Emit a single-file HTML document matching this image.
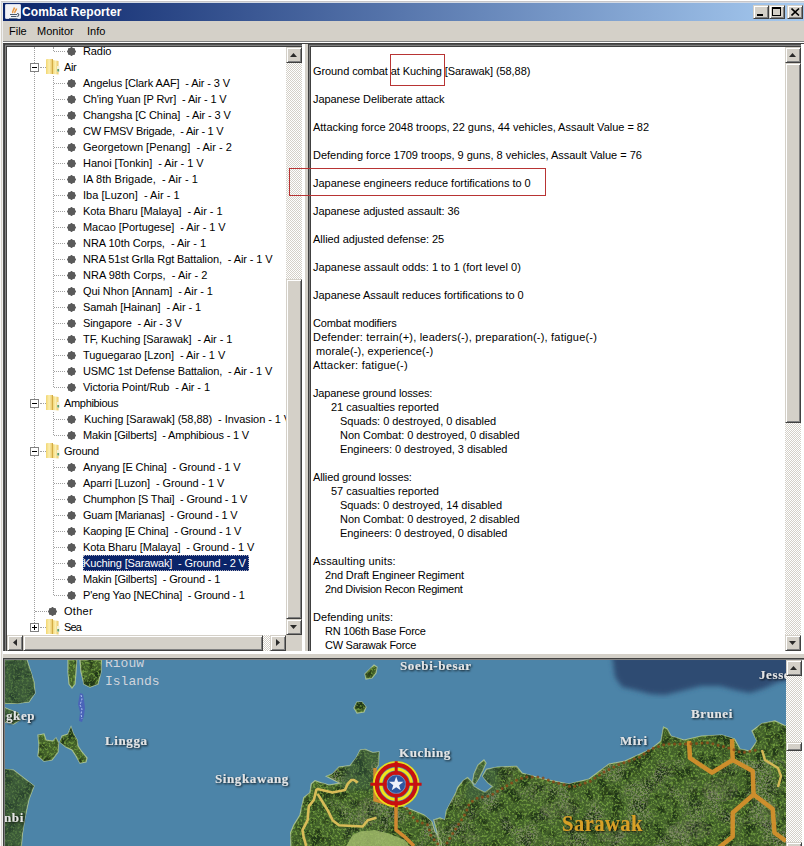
<!DOCTYPE html><html><head><meta charset="utf-8"><style>
*{margin:0;padding:0;box-sizing:border-box}
html,body{width:804px;height:846px;overflow:hidden;background:#D4D0C8;font-family:"Liberation Sans",sans-serif;font-size:11px;color:#000}
.a{position:absolute}
.t{position:absolute;white-space:pre;line-height:14px;height:14px}
.sb{position:absolute;background-color:#D4D0C8;background-image:repeating-conic-gradient(#D4D0C8 0 25%,#FFFFFF 0 50%);background-size:2px 2px}
.btn{position:absolute;background:#D4D0C8;border-style:solid;border-width:1px;border-color:#D4D0C8 #404040 #404040 #D4D0C8;box-shadow:inset 1px 1px 0 #fff, inset -1px -1px 0 #808080}
</style></head><body>

<div class="a" style="left:0px;top:0px;width:804px;height:1px;background:#fff;"></div>
<div class="a" style="left:0px;top:1px;width:804px;height:1px;background:#C8C6C8;"></div>
<div class="a" style="left:0px;top:2px;width:804px;height:1px;background:#D4DAE4;"></div>
<div class="a" style="left:0px;top:0px;width:1px;height:846px;background:#F8F8F8;"></div>
<div class="a" style="left:2px;top:3px;width:1px;height:843px;background:#EEEEEE;"></div>
<div class="a" style="left:3px;top:3px;width:801px;height:18px;background:linear-gradient(to right,#0A246A 0%,#A6CAF0 100%);"></div>
<div class="a" style="left:5px;top:4px;width:16px;height:15px;background:#F2F2F6;border-radius:2px;box-shadow:inset 0 0 0 1px #D8DCE8">
<svg width="16" height="16" viewBox="0 0 16 16" style="position:absolute;left:0;top:0">
<path d="M8,9 C6.5,7.5 9,6 9.5,3.5 M10,9 C9,7.5 11.5,6.5 11.5,4.5" stroke="#E8943A" stroke-width="1.5" fill="none"/>
<path d="M5,10.5 H12 M6,12.5 H11" stroke="#4A5A6C" stroke-width="1.2" fill="none"/>
<path d="M12,9.5 C14.5,9.5 14.5,12.5 11.5,12.5" stroke="#4A5A6C" stroke-width="1.1" fill="none"/>
<path d="M4,14.5 H12.5" stroke="#6A7A90" stroke-width="1" fill="none"/>
</svg></div>
<div class="t" style="left:22px;top:5px;color:#fff;font-weight:bold;font-size:12px;letter-spacing:0.1px">Combat Reporter</div>
<div class="btn" style="left:753px;top:5px;width:16px;height:14px"><div class="a" style="left:3px;top:8px;width:6px;height:2px;background:#000"></div></div>
<div class="btn" style="left:769px;top:5px;width:16px;height:14px"><div class="a" style="left:2px;top:1px;width:9px;height:9px;border:1px solid #000;border-top-width:2px"></div></div>
<div class="btn" style="left:787px;top:5px;width:16px;height:14px"><svg class="a" style="left:3px;top:2px" width="9" height="8" viewBox="0 0 9 8"><path d="M0.5 0.5 L8 7.5 M8 0.5 L0.5 7.5" stroke="#000" stroke-width="1.6"/></svg></div>
<div class="t" style="left:9px;top:24px">File</div>
<div class="t" style="left:37px;top:24px">Monitor</div>
<div class="t" style="left:87px;top:24px">Info</div>
<div class="a" style="left:3px;top:41px;width:801px;height:1px;background:#808080;"></div>
<div class="a" style="left:3px;top:42px;width:801px;height:1px;background:#fff;"></div>
<div class="a" style="left:3px;top:43px;width:801px;height:1px;background:#404040;"></div>
<div class="a" style="left:3px;top:44px;width:299px;height:1px;background:#505050;"></div>
<div class="a" style="left:3px;top:45px;width:299px;height:1px;background:#808080;"></div>
<div class="a" style="left:3px;top:46px;width:299px;height:1px;background:#404040;"></div>
<div class="a" style="left:3px;top:44px;width:1px;height:607px;background:#505050;"></div>
<div class="a" style="left:4px;top:44px;width:1px;height:607px;background:#404040;"></div>
<div class="a" style="left:5px;top:45px;width:1px;height:606px;background:#808080;"></div>
<div class="a" style="left:6px;top:46px;width:1px;height:605px;background:#404040;"></div>
<div class="a" style="left:7px;top:47px;width:279px;height:588px;background:#fff;"></div>
<div class="a" style="left:302px;top:44px;width:3px;height:610px;background:#fff;"></div>
<div class="a" style="left:305px;top:44px;width:3px;height:610px;background:#D4D0C8;"></div>
<div class="a" style="left:308px;top:44px;width:496px;height:1px;background:#505050;"></div>
<div class="a" style="left:308px;top:45px;width:496px;height:1px;background:#808080;"></div>
<div class="a" style="left:308px;top:46px;width:496px;height:1px;background:#404040;"></div>
<div class="a" style="left:308px;top:44px;width:1px;height:607px;background:#404040;"></div>
<div class="a" style="left:309px;top:45px;width:1px;height:606px;background:#808080;"></div>
<div class="a" style="left:310px;top:46px;width:1px;height:605px;background:#404040;"></div>
<div class="a" style="left:311px;top:47px;width:474px;height:604px;background:#fff;"></div>
<div class="a" style="left:801px;top:44px;width:3px;height:610px;background:#fff;"></div>
<div class="a" style="left:3px;top:651px;width:799px;height:3px;background:#fff;"></div>
<div class="a" style="left:3px;top:654px;width:801px;height:4px;background:#D4D0C8;"></div>
<div class="a" style="left:34px;top:47px;width:1px;height:580px;border-left:1px dotted #A0A0A0"></div>
<div class="a" style="left:53px;top:47px;width:1px;height:4px;border-left:1px dotted #A0A0A0"></div>
<div class="a" style="left:53px;top:76px;width:1px;height:311px;border-left:1px dotted #A0A0A0"></div>
<div class="a" style="left:53px;top:412px;width:1px;height:23px;border-left:1px dotted #A0A0A0"></div>
<div class="a" style="left:53px;top:460px;width:1px;height:135px;border-left:1px dotted #A0A0A0"></div>
<svg class="a" style="left:67px;top:47px" width="9" height="9"><path d="M9.20,4.50 L8.10,5.99 L7.82,7.82 L5.99,8.10 L4.50,9.20 L3.01,8.10 L1.18,7.82 L0.90,5.99 L-0.20,4.50 L0.90,3.01 L1.18,1.18 L3.01,0.90 L4.50,-0.20 L5.99,0.90 L7.82,1.18 L8.10,3.01Z" fill="#5A5A5A"/></svg>
<div class="a" style="left:54px;top:51px;width:11px;height:1px;border-top:1px dotted #A0A0A0"></div>
<div class="t" style="left:83px;top:44px;letter-spacing:-0.095px">Radio</div>
<div class="a" style="left:30px;top:63px;width:9px;height:9px;border:1px solid #808080;background:#fff"></div>
<div class="a" style="left:32px;top:67px;width:5px;height:1px;background:#000"></div>
<div class="a" style="left:40px;top:67px;width:6px;height:1px;border-top:1px dotted #A0A0A0"></div>
<svg class="a" style="left:45px;top:58px" width="15" height="17" viewBox="0 0 15 17">
<defs><linearGradient id="fg1" x1="0" x2="1" y1="0" y2="0"><stop offset="0" stop-color="#F2D670"/><stop offset="0.5" stop-color="#FBEEB0"/><stop offset="1" stop-color="#E8C460"/></linearGradient></defs>
<path d="M1,2 Q1,1 2,1 L7.5,1 L7.5,16 L1,16 Z" fill="url(#fg1)"/>
<path d="M7.5,2 L13.5,3 L13.5,16.5 L7.5,16 Z" fill="url(#fg1)"/>
<path d="M7.5,1 V16" stroke="#D2AA44" stroke-width="1"/>
<rect x="12" y="8" width="2.5" height="6" fill="#F4F0D8"/>
<rect x="12.3" y="11" width="1.8" height="2.5" fill="#5A9C6C"/>
</svg>
<div class="t" style="left:64px;top:60px;letter-spacing:-0.42px">Air</div>
<svg class="a" style="left:67px;top:79px" width="9" height="9"><path d="M9.20,4.50 L8.10,5.99 L7.82,7.82 L5.99,8.10 L4.50,9.20 L3.01,8.10 L1.18,7.82 L0.90,5.99 L-0.20,4.50 L0.90,3.01 L1.18,1.18 L3.01,0.90 L4.50,-0.20 L5.99,0.90 L7.82,1.18 L8.10,3.01Z" fill="#5A5A5A"/></svg>
<div class="a" style="left:54px;top:83px;width:11px;height:1px;border-top:1px dotted #A0A0A0"></div>
<div class="t" style="left:83px;top:76px;letter-spacing:-0.104px">Angelus [Clark AAF]&nbsp; - Air - 3 V</div>
<svg class="a" style="left:67px;top:95px" width="9" height="9"><path d="M9.20,4.50 L8.10,5.99 L7.82,7.82 L5.99,8.10 L4.50,9.20 L3.01,8.10 L1.18,7.82 L0.90,5.99 L-0.20,4.50 L0.90,3.01 L1.18,1.18 L3.01,0.90 L4.50,-0.20 L5.99,0.90 L7.82,1.18 L8.10,3.01Z" fill="#5A5A5A"/></svg>
<div class="a" style="left:54px;top:99px;width:11px;height:1px;border-top:1px dotted #A0A0A0"></div>
<div class="t" style="left:83px;top:92px;letter-spacing:-0.113px">Ch&#x27;ing Yuan [P Rvr]&nbsp; - Air - 1 V</div>
<svg class="a" style="left:67px;top:111px" width="9" height="9"><path d="M9.20,4.50 L8.10,5.99 L7.82,7.82 L5.99,8.10 L4.50,9.20 L3.01,8.10 L1.18,7.82 L0.90,5.99 L-0.20,4.50 L0.90,3.01 L1.18,1.18 L3.01,0.90 L4.50,-0.20 L5.99,0.90 L7.82,1.18 L8.10,3.01Z" fill="#5A5A5A"/></svg>
<div class="a" style="left:54px;top:115px;width:11px;height:1px;border-top:1px dotted #A0A0A0"></div>
<div class="t" style="left:83px;top:108px;letter-spacing:-0.103px">Changsha [C China]&nbsp; - Air - 3 V</div>
<svg class="a" style="left:67px;top:127px" width="9" height="9"><path d="M9.20,4.50 L8.10,5.99 L7.82,7.82 L5.99,8.10 L4.50,9.20 L3.01,8.10 L1.18,7.82 L0.90,5.99 L-0.20,4.50 L0.90,3.01 L1.18,1.18 L3.01,0.90 L4.50,-0.20 L5.99,0.90 L7.82,1.18 L8.10,3.01Z" fill="#5A5A5A"/></svg>
<div class="a" style="left:54px;top:131px;width:11px;height:1px;border-top:1px dotted #A0A0A0"></div>
<div class="t" style="left:83px;top:124px;letter-spacing:-0.262px">CW FMSV Brigade,&nbsp; - Air - 1 V</div>
<svg class="a" style="left:67px;top:143px" width="9" height="9"><path d="M9.20,4.50 L8.10,5.99 L7.82,7.82 L5.99,8.10 L4.50,9.20 L3.01,8.10 L1.18,7.82 L0.90,5.99 L-0.20,4.50 L0.90,3.01 L1.18,1.18 L3.01,0.90 L4.50,-0.20 L5.99,0.90 L7.82,1.18 L8.10,3.01Z" fill="#5A5A5A"/></svg>
<div class="a" style="left:54px;top:147px;width:11px;height:1px;border-top:1px dotted #A0A0A0"></div>
<div class="t" style="left:83px;top:140px;letter-spacing:0.012px">Georgetown [Penang]&nbsp; - Air - 2</div>
<svg class="a" style="left:67px;top:159px" width="9" height="9"><path d="M9.20,4.50 L8.10,5.99 L7.82,7.82 L5.99,8.10 L4.50,9.20 L3.01,8.10 L1.18,7.82 L0.90,5.99 L-0.20,4.50 L0.90,3.01 L1.18,1.18 L3.01,0.90 L4.50,-0.20 L5.99,0.90 L7.82,1.18 L8.10,3.01Z" fill="#5A5A5A"/></svg>
<div class="a" style="left:54px;top:163px;width:11px;height:1px;border-top:1px dotted #A0A0A0"></div>
<div class="t" style="left:83px;top:156px;letter-spacing:-0.038px">Hanoi [Tonkin]&nbsp; - Air - 1 V</div>
<svg class="a" style="left:67px;top:175px" width="9" height="9"><path d="M9.20,4.50 L8.10,5.99 L7.82,7.82 L5.99,8.10 L4.50,9.20 L3.01,8.10 L1.18,7.82 L0.90,5.99 L-0.20,4.50 L0.90,3.01 L1.18,1.18 L3.01,0.90 L4.50,-0.20 L5.99,0.90 L7.82,1.18 L8.10,3.01Z" fill="#5A5A5A"/></svg>
<div class="a" style="left:54px;top:179px;width:11px;height:1px;border-top:1px dotted #A0A0A0"></div>
<div class="t" style="left:83px;top:172px;letter-spacing:0.044px">IA 8th Brigade,&nbsp; - Air - 1</div>
<svg class="a" style="left:67px;top:191px" width="9" height="9"><path d="M9.20,4.50 L8.10,5.99 L7.82,7.82 L5.99,8.10 L4.50,9.20 L3.01,8.10 L1.18,7.82 L0.90,5.99 L-0.20,4.50 L0.90,3.01 L1.18,1.18 L3.01,0.90 L4.50,-0.20 L5.99,0.90 L7.82,1.18 L8.10,3.01Z" fill="#5A5A5A"/></svg>
<div class="a" style="left:54px;top:195px;width:11px;height:1px;border-top:1px dotted #A0A0A0"></div>
<div class="t" style="left:83px;top:188px;letter-spacing:0.03px">Iba [Luzon]&nbsp; - Air - 1</div>
<svg class="a" style="left:67px;top:207px" width="9" height="9"><path d="M9.20,4.50 L8.10,5.99 L7.82,7.82 L5.99,8.10 L4.50,9.20 L3.01,8.10 L1.18,7.82 L0.90,5.99 L-0.20,4.50 L0.90,3.01 L1.18,1.18 L3.01,0.90 L4.50,-0.20 L5.99,0.90 L7.82,1.18 L8.10,3.01Z" fill="#5A5A5A"/></svg>
<div class="a" style="left:54px;top:211px;width:11px;height:1px;border-top:1px dotted #A0A0A0"></div>
<div class="t" style="left:83px;top:204px;letter-spacing:-0.057px">Kota Bharu [Malaya]&nbsp; - Air - 1</div>
<svg class="a" style="left:67px;top:223px" width="9" height="9"><path d="M9.20,4.50 L8.10,5.99 L7.82,7.82 L5.99,8.10 L4.50,9.20 L3.01,8.10 L1.18,7.82 L0.90,5.99 L-0.20,4.50 L0.90,3.01 L1.18,1.18 L3.01,0.90 L4.50,-0.20 L5.99,0.90 L7.82,1.18 L8.10,3.01Z" fill="#5A5A5A"/></svg>
<div class="a" style="left:54px;top:227px;width:11px;height:1px;border-top:1px dotted #A0A0A0"></div>
<div class="t" style="left:83px;top:220px;letter-spacing:-0.057px">Macao [Portugese]&nbsp; - Air - 1 V</div>
<svg class="a" style="left:67px;top:239px" width="9" height="9"><path d="M9.20,4.50 L8.10,5.99 L7.82,7.82 L5.99,8.10 L4.50,9.20 L3.01,8.10 L1.18,7.82 L0.90,5.99 L-0.20,4.50 L0.90,3.01 L1.18,1.18 L3.01,0.90 L4.50,-0.20 L5.99,0.90 L7.82,1.18 L8.10,3.01Z" fill="#5A5A5A"/></svg>
<div class="a" style="left:54px;top:243px;width:11px;height:1px;border-top:1px dotted #A0A0A0"></div>
<div class="t" style="left:83px;top:236px;letter-spacing:-0.044px">NRA 10th Corps,&nbsp; - Air - 1</div>
<svg class="a" style="left:67px;top:255px" width="9" height="9"><path d="M9.20,4.50 L8.10,5.99 L7.82,7.82 L5.99,8.10 L4.50,9.20 L3.01,8.10 L1.18,7.82 L0.90,5.99 L-0.20,4.50 L0.90,3.01 L1.18,1.18 L3.01,0.90 L4.50,-0.20 L5.99,0.90 L7.82,1.18 L8.10,3.01Z" fill="#5A5A5A"/></svg>
<div class="a" style="left:54px;top:259px;width:11px;height:1px;border-top:1px dotted #A0A0A0"></div>
<div class="t" style="left:83px;top:252px;letter-spacing:-0.101px">NRA 51st Grlla Rgt Battalion,&nbsp; - Air - 1 V</div>
<svg class="a" style="left:67px;top:271px" width="9" height="9"><path d="M9.20,4.50 L8.10,5.99 L7.82,7.82 L5.99,8.10 L4.50,9.20 L3.01,8.10 L1.18,7.82 L0.90,5.99 L-0.20,4.50 L0.90,3.01 L1.18,1.18 L3.01,0.90 L4.50,-0.20 L5.99,0.90 L7.82,1.18 L8.10,3.01Z" fill="#5A5A5A"/></svg>
<div class="a" style="left:54px;top:275px;width:11px;height:1px;border-top:1px dotted #A0A0A0"></div>
<div class="t" style="left:83px;top:268px;letter-spacing:0.008px">NRA 98th Corps,&nbsp; - Air - 2</div>
<svg class="a" style="left:67px;top:287px" width="9" height="9"><path d="M9.20,4.50 L8.10,5.99 L7.82,7.82 L5.99,8.10 L4.50,9.20 L3.01,8.10 L1.18,7.82 L0.90,5.99 L-0.20,4.50 L0.90,3.01 L1.18,1.18 L3.01,0.90 L4.50,-0.20 L5.99,0.90 L7.82,1.18 L8.10,3.01Z" fill="#5A5A5A"/></svg>
<div class="a" style="left:54px;top:291px;width:11px;height:1px;border-top:1px dotted #A0A0A0"></div>
<div class="t" style="left:83px;top:284px;letter-spacing:-0.082px">Qui Nhon [Annam]&nbsp; - Air - 1</div>
<svg class="a" style="left:67px;top:303px" width="9" height="9"><path d="M9.20,4.50 L8.10,5.99 L7.82,7.82 L5.99,8.10 L4.50,9.20 L3.01,8.10 L1.18,7.82 L0.90,5.99 L-0.20,4.50 L0.90,3.01 L1.18,1.18 L3.01,0.90 L4.50,-0.20 L5.99,0.90 L7.82,1.18 L8.10,3.01Z" fill="#5A5A5A"/></svg>
<div class="a" style="left:54px;top:307px;width:11px;height:1px;border-top:1px dotted #A0A0A0"></div>
<div class="t" style="left:83px;top:300px;letter-spacing:-0.099px">Samah [Hainan]&nbsp; - Air - 1</div>
<svg class="a" style="left:67px;top:319px" width="9" height="9"><path d="M9.20,4.50 L8.10,5.99 L7.82,7.82 L5.99,8.10 L4.50,9.20 L3.01,8.10 L1.18,7.82 L0.90,5.99 L-0.20,4.50 L0.90,3.01 L1.18,1.18 L3.01,0.90 L4.50,-0.20 L5.99,0.90 L7.82,1.18 L8.10,3.01Z" fill="#5A5A5A"/></svg>
<div class="a" style="left:54px;top:323px;width:11px;height:1px;border-top:1px dotted #A0A0A0"></div>
<div class="t" style="left:83px;top:316px;letter-spacing:-0.151px">Singapore&nbsp; - Air - 3 V</div>
<svg class="a" style="left:67px;top:335px" width="9" height="9"><path d="M9.20,4.50 L8.10,5.99 L7.82,7.82 L5.99,8.10 L4.50,9.20 L3.01,8.10 L1.18,7.82 L0.90,5.99 L-0.20,4.50 L0.90,3.01 L1.18,1.18 L3.01,0.90 L4.50,-0.20 L5.99,0.90 L7.82,1.18 L8.10,3.01Z" fill="#5A5A5A"/></svg>
<div class="a" style="left:54px;top:339px;width:11px;height:1px;border-top:1px dotted #A0A0A0"></div>
<div class="t" style="left:83px;top:332px;letter-spacing:-0.073px">TF, Kuching [Sarawak]&nbsp; - Air - 1</div>
<svg class="a" style="left:67px;top:351px" width="9" height="9"><path d="M9.20,4.50 L8.10,5.99 L7.82,7.82 L5.99,8.10 L4.50,9.20 L3.01,8.10 L1.18,7.82 L0.90,5.99 L-0.20,4.50 L0.90,3.01 L1.18,1.18 L3.01,0.90 L4.50,-0.20 L5.99,0.90 L7.82,1.18 L8.10,3.01Z" fill="#5A5A5A"/></svg>
<div class="a" style="left:54px;top:355px;width:11px;height:1px;border-top:1px dotted #A0A0A0"></div>
<div class="t" style="left:83px;top:348px;letter-spacing:-0.057px">Tuguegarao [Lzon]&nbsp; - Air - 1 V</div>
<svg class="a" style="left:67px;top:367px" width="9" height="9"><path d="M9.20,4.50 L8.10,5.99 L7.82,7.82 L5.99,8.10 L4.50,9.20 L3.01,8.10 L1.18,7.82 L0.90,5.99 L-0.20,4.50 L0.90,3.01 L1.18,1.18 L3.01,0.90 L4.50,-0.20 L5.99,0.90 L7.82,1.18 L8.10,3.01Z" fill="#5A5A5A"/></svg>
<div class="a" style="left:54px;top:371px;width:11px;height:1px;border-top:1px dotted #A0A0A0"></div>
<div class="t" style="left:83px;top:364px;letter-spacing:-0.146px">USMC 1st Defense Battalion,&nbsp; - Air - 1 V</div>
<svg class="a" style="left:67px;top:383px" width="9" height="9"><path d="M9.20,4.50 L8.10,5.99 L7.82,7.82 L5.99,8.10 L4.50,9.20 L3.01,8.10 L1.18,7.82 L0.90,5.99 L-0.20,4.50 L0.90,3.01 L1.18,1.18 L3.01,0.90 L4.50,-0.20 L5.99,0.90 L7.82,1.18 L8.10,3.01Z" fill="#5A5A5A"/></svg>
<div class="a" style="left:54px;top:387px;width:11px;height:1px;border-top:1px dotted #A0A0A0"></div>
<div class="t" style="left:83px;top:380px;letter-spacing:-0.085px">Victoria Point/Rub&nbsp; - Air - 1</div>
<div class="a" style="left:30px;top:399px;width:9px;height:9px;border:1px solid #808080;background:#fff"></div>
<div class="a" style="left:32px;top:403px;width:5px;height:1px;background:#000"></div>
<div class="a" style="left:40px;top:403px;width:6px;height:1px;border-top:1px dotted #A0A0A0"></div>
<svg class="a" style="left:45px;top:394px" width="15" height="17" viewBox="0 0 15 17">
<defs><linearGradient id="fg22" x1="0" x2="1" y1="0" y2="0"><stop offset="0" stop-color="#F2D670"/><stop offset="0.5" stop-color="#FBEEB0"/><stop offset="1" stop-color="#E8C460"/></linearGradient></defs>
<path d="M1,2 Q1,1 2,1 L7.5,1 L7.5,16 L1,16 Z" fill="url(#fg22)"/>
<path d="M7.5,2 L13.5,3 L13.5,16.5 L7.5,16 Z" fill="url(#fg22)"/>
<path d="M7.5,1 V16" stroke="#D2AA44" stroke-width="1"/>
<rect x="12" y="8" width="2.5" height="6" fill="#F4F0D8"/>
<rect x="12.3" y="11" width="1.8" height="2.5" fill="#5A9C6C"/>
</svg>
<div class="t" style="left:64px;top:396px;letter-spacing:-0.325px">Amphibious</div>
<svg class="a" style="left:67px;top:415px" width="9" height="9"><path d="M9.20,4.50 L8.10,5.99 L7.82,7.82 L5.99,8.10 L4.50,9.20 L3.01,8.10 L1.18,7.82 L0.90,5.99 L-0.20,4.50 L0.90,3.01 L1.18,1.18 L3.01,0.90 L4.50,-0.20 L5.99,0.90 L7.82,1.18 L8.10,3.01Z" fill="#5A5A5A"/></svg>
<div class="a" style="left:54px;top:419px;width:11px;height:1px;border-top:1px dotted #A0A0A0"></div>
<div class="t" style="left:84px;top:412px;letter-spacing:-0.06px">Kuching [Sarawak] (58,88)&nbsp; - Invasion - 1 V</div>
<svg class="a" style="left:67px;top:431px" width="9" height="9"><path d="M9.20,4.50 L8.10,5.99 L7.82,7.82 L5.99,8.10 L4.50,9.20 L3.01,8.10 L1.18,7.82 L0.90,5.99 L-0.20,4.50 L0.90,3.01 L1.18,1.18 L3.01,0.90 L4.50,-0.20 L5.99,0.90 L7.82,1.18 L8.10,3.01Z" fill="#5A5A5A"/></svg>
<div class="a" style="left:54px;top:435px;width:11px;height:1px;border-top:1px dotted #A0A0A0"></div>
<div class="t" style="left:83px;top:428px;letter-spacing:-0.177px">Makin [Gilberts]&nbsp; - Amphibious - 1 V</div>
<div class="a" style="left:30px;top:447px;width:9px;height:9px;border:1px solid #808080;background:#fff"></div>
<div class="a" style="left:32px;top:451px;width:5px;height:1px;background:#000"></div>
<div class="a" style="left:40px;top:451px;width:6px;height:1px;border-top:1px dotted #A0A0A0"></div>
<svg class="a" style="left:45px;top:442px" width="15" height="17" viewBox="0 0 15 17">
<defs><linearGradient id="fg25" x1="0" x2="1" y1="0" y2="0"><stop offset="0" stop-color="#F2D670"/><stop offset="0.5" stop-color="#FBEEB0"/><stop offset="1" stop-color="#E8C460"/></linearGradient></defs>
<path d="M1,2 Q1,1 2,1 L7.5,1 L7.5,16 L1,16 Z" fill="url(#fg25)"/>
<path d="M7.5,2 L13.5,3 L13.5,16.5 L7.5,16 Z" fill="url(#fg25)"/>
<path d="M7.5,1 V16" stroke="#D2AA44" stroke-width="1"/>
<rect x="12" y="8" width="2.5" height="6" fill="#F4F0D8"/>
<rect x="12.3" y="11" width="1.8" height="2.5" fill="#5A9C6C"/>
</svg>
<div class="t" style="left:64px;top:444px;letter-spacing:-0.32px">Ground</div>
<svg class="a" style="left:67px;top:463px" width="9" height="9"><path d="M9.20,4.50 L8.10,5.99 L7.82,7.82 L5.99,8.10 L4.50,9.20 L3.01,8.10 L1.18,7.82 L0.90,5.99 L-0.20,4.50 L0.90,3.01 L1.18,1.18 L3.01,0.90 L4.50,-0.20 L5.99,0.90 L7.82,1.18 L8.10,3.01Z" fill="#5A5A5A"/></svg>
<div class="a" style="left:54px;top:467px;width:11px;height:1px;border-top:1px dotted #A0A0A0"></div>
<div class="t" style="left:83px;top:460px;letter-spacing:-0.122px">Anyang [E China]&nbsp; - Ground - 1 V</div>
<svg class="a" style="left:67px;top:479px" width="9" height="9"><path d="M9.20,4.50 L8.10,5.99 L7.82,7.82 L5.99,8.10 L4.50,9.20 L3.01,8.10 L1.18,7.82 L0.90,5.99 L-0.20,4.50 L0.90,3.01 L1.18,1.18 L3.01,0.90 L4.50,-0.20 L5.99,0.90 L7.82,1.18 L8.10,3.01Z" fill="#5A5A5A"/></svg>
<div class="a" style="left:54px;top:483px;width:11px;height:1px;border-top:1px dotted #A0A0A0"></div>
<div class="t" style="left:83px;top:476px;letter-spacing:-0.103px">Aparri [Luzon]&nbsp; - Ground - 1 V</div>
<svg class="a" style="left:67px;top:495px" width="9" height="9"><path d="M9.20,4.50 L8.10,5.99 L7.82,7.82 L5.99,8.10 L4.50,9.20 L3.01,8.10 L1.18,7.82 L0.90,5.99 L-0.20,4.50 L0.90,3.01 L1.18,1.18 L3.01,0.90 L4.50,-0.20 L5.99,0.90 L7.82,1.18 L8.10,3.01Z" fill="#5A5A5A"/></svg>
<div class="a" style="left:54px;top:499px;width:11px;height:1px;border-top:1px dotted #A0A0A0"></div>
<div class="t" style="left:83px;top:492px;letter-spacing:-0.189px">Chumphon [S Thai]&nbsp; - Ground - 1 V</div>
<svg class="a" style="left:67px;top:511px" width="9" height="9"><path d="M9.20,4.50 L8.10,5.99 L7.82,7.82 L5.99,8.10 L4.50,9.20 L3.01,8.10 L1.18,7.82 L0.90,5.99 L-0.20,4.50 L0.90,3.01 L1.18,1.18 L3.01,0.90 L4.50,-0.20 L5.99,0.90 L7.82,1.18 L8.10,3.01Z" fill="#5A5A5A"/></svg>
<div class="a" style="left:54px;top:515px;width:11px;height:1px;border-top:1px dotted #A0A0A0"></div>
<div class="t" style="left:83px;top:508px;letter-spacing:-0.183px">Guam [Marianas]&nbsp; - Ground - 1 V</div>
<svg class="a" style="left:67px;top:527px" width="9" height="9"><path d="M9.20,4.50 L8.10,5.99 L7.82,7.82 L5.99,8.10 L4.50,9.20 L3.01,8.10 L1.18,7.82 L0.90,5.99 L-0.20,4.50 L0.90,3.01 L1.18,1.18 L3.01,0.90 L4.50,-0.20 L5.99,0.90 L7.82,1.18 L8.10,3.01Z" fill="#5A5A5A"/></svg>
<div class="a" style="left:54px;top:531px;width:11px;height:1px;border-top:1px dotted #A0A0A0"></div>
<div class="t" style="left:83px;top:524px;letter-spacing:-0.191px">Kaoping [E China]&nbsp; - Ground - 1 V</div>
<svg class="a" style="left:67px;top:543px" width="9" height="9"><path d="M9.20,4.50 L8.10,5.99 L7.82,7.82 L5.99,8.10 L4.50,9.20 L3.01,8.10 L1.18,7.82 L0.90,5.99 L-0.20,4.50 L0.90,3.01 L1.18,1.18 L3.01,0.90 L4.50,-0.20 L5.99,0.90 L7.82,1.18 L8.10,3.01Z" fill="#5A5A5A"/></svg>
<div class="a" style="left:54px;top:547px;width:11px;height:1px;border-top:1px dotted #A0A0A0"></div>
<div class="t" style="left:83px;top:540px;letter-spacing:-0.123px">Kota Bharu [Malaya]&nbsp; - Ground - 1 V</div>
<svg class="a" style="left:67px;top:559px" width="9" height="9"><path d="M9.20,4.50 L8.10,5.99 L7.82,7.82 L5.99,8.10 L4.50,9.20 L3.01,8.10 L1.18,7.82 L0.90,5.99 L-0.20,4.50 L0.90,3.01 L1.18,1.18 L3.01,0.90 L4.50,-0.20 L5.99,0.90 L7.82,1.18 L8.10,3.01Z" fill="#5A5A5A"/></svg>
<div class="a" style="left:54px;top:563px;width:11px;height:1px;border-top:1px dotted #A0A0A0"></div>
<div class="a" style="left:83px;top:555px;width:166px;height:16px;background:#0A246A;outline:1px dotted #B0B0C0;outline-offset:-1px"></div>
<div class="t" style="left:83px;top:556px;color:#fff;letter-spacing:-0.143px">Kuching [Sarawak]&nbsp; - Ground - 2 V</div>
<svg class="a" style="left:67px;top:575px" width="9" height="9"><path d="M9.20,4.50 L8.10,5.99 L7.82,7.82 L5.99,8.10 L4.50,9.20 L3.01,8.10 L1.18,7.82 L0.90,5.99 L-0.20,4.50 L0.90,3.01 L1.18,1.18 L3.01,0.90 L4.50,-0.20 L5.99,0.90 L7.82,1.18 L8.10,3.01Z" fill="#5A5A5A"/></svg>
<div class="a" style="left:54px;top:579px;width:11px;height:1px;border-top:1px dotted #A0A0A0"></div>
<div class="t" style="left:83px;top:572px;letter-spacing:-0.154px">Makin [Gilberts]&nbsp; - Ground - 1</div>
<svg class="a" style="left:67px;top:591px" width="9" height="9"><path d="M9.20,4.50 L8.10,5.99 L7.82,7.82 L5.99,8.10 L4.50,9.20 L3.01,8.10 L1.18,7.82 L0.90,5.99 L-0.20,4.50 L0.90,3.01 L1.18,1.18 L3.01,0.90 L4.50,-0.20 L5.99,0.90 L7.82,1.18 L8.10,3.01Z" fill="#5A5A5A"/></svg>
<div class="a" style="left:54px;top:595px;width:11px;height:1px;border-top:1px dotted #A0A0A0"></div>
<div class="t" style="left:83px;top:588px;letter-spacing:-0.189px">P&#x27;eng Yao [NEChina]&nbsp; - Ground - 1</div>
<div class="a" style="left:35px;top:611px;width:12px;height:1px;border-top:1px dotted #A0A0A0"></div>
<svg class="a" style="left:48px;top:607px" width="9" height="9"><path d="M9.20,4.50 L8.10,5.99 L7.82,7.82 L5.99,8.10 L4.50,9.20 L3.01,8.10 L1.18,7.82 L0.90,5.99 L-0.20,4.50 L0.90,3.01 L1.18,1.18 L3.01,0.90 L4.50,-0.20 L5.99,0.90 L7.82,1.18 L8.10,3.01Z" fill="#5A5A5A"/></svg>
<div class="t" style="left:64px;top:604px;letter-spacing:0.28px">Other</div>
<div class="a" style="left:30px;top:623px;width:9px;height:9px;border:1px solid #808080;background:#fff"></div>
<div class="a" style="left:32px;top:627px;width:5px;height:1px;background:#000"></div>
<div class="a" style="left:34px;top:625px;width:1px;height:5px;background:#000"></div>
<div class="a" style="left:40px;top:627px;width:6px;height:1px;border-top:1px dotted #A0A0A0"></div>
<svg class="a" style="left:45px;top:618px" width="15" height="17" viewBox="0 0 15 17">
<defs><linearGradient id="fg36" x1="0" x2="1" y1="0" y2="0"><stop offset="0" stop-color="#F2D670"/><stop offset="0.5" stop-color="#FBEEB0"/><stop offset="1" stop-color="#E8C460"/></linearGradient></defs>
<path d="M1,2 Q1,1 2,1 L7.5,1 L7.5,16 L1,16 Z" fill="url(#fg36)"/>
<path d="M7.5,2 L13.5,3 L13.5,16.5 L7.5,16 Z" fill="url(#fg36)"/>
<path d="M7.5,1 V16" stroke="#D2AA44" stroke-width="1"/>
<rect x="12" y="8" width="2.5" height="6" fill="#F4F0D8"/>
<rect x="12.3" y="11" width="1.8" height="2.5" fill="#5A9C6C"/>
</svg>
<div class="t" style="left:64px;top:620px;letter-spacing:-0.82px">Sea</div>
<div class="sb" style="left:286px;top:47px;width:16px;height:588px"></div>
<div class="btn" style="left:286px;top:47px;width:16px;height:16px"><svg class="a" style="left:3px;top:5px" width="7" height="4"><path d="M0 4 L3.5 0 L7 4Z" fill="#2A2A2A"/></svg></div>
<div class="btn" style="left:286px;top:279px;width:16px;height:340px"></div>
<div class="btn" style="left:286px;top:619px;width:16px;height:16px"><svg class="a" style="left:3px;top:5px" width="7" height="4"><path d="M0 0 L3.5 4 L7 0Z" fill="#2A2A2A"/></svg></div>
<div class="sb" style="left:7px;top:635px;width:279px;height:16px"></div>
<div class="btn" style="left:7px;top:635px;width:16px;height:16px"><svg class="a" style="left:5px;top:3px" width="4" height="7"><path d="M4 0 L0 3.5 L4 7Z" fill="#2A2A2A"/></svg></div>
<div class="btn" style="left:23px;top:635px;width:240px;height:16px"></div>
<div class="btn" style="left:270px;top:635px;width:16px;height:16px"><svg class="a" style="left:5px;top:3px" width="4" height="7"><path d="M0 0 L4 3.5 L0 7Z" fill="#2A2A2A"/></svg></div>
<div class="a" style="left:286px;top:635px;width:16px;height:16px;background:#D4D0C8;"></div>
<div class="t" style="left:313px;top:64px;letter-spacing:-0.083px">Ground combat at Kuching [Sarawak] (58,88)</div>
<div class="t" style="left:313px;top:92px;letter-spacing:-0.072px">Japanese Deliberate attack</div>
<div class="t" style="left:313px;top:120px;letter-spacing:-0.014px">Attacking force 2048 troops, 22 guns, 44 vehicles, Assault Value = 82</div>
<div class="t" style="left:313px;top:148px;letter-spacing:-0.012px">Defending force 1709 troops, 9 guns, 8 vehicles, Assault Value = 76</div>
<div class="t" style="left:313px;top:176px;letter-spacing:-0.027px">Japanese engineers reduce fortifications to 0</div>
<div class="t" style="left:313px;top:204px;letter-spacing:-0.07px">Japanese adjusted assault: 36</div>
<div class="t" style="left:313px;top:232px;letter-spacing:-0.033px">Allied adjusted defense: 25</div>
<div class="t" style="left:313px;top:260px;letter-spacing:0.012px">Japanese assault odds: 1 to 1 (fort level 0)</div>
<div class="t" style="left:313px;top:288px;letter-spacing:-0.02px">Japanese Assault reduces fortifications to 0</div>
<div class="t" style="left:313px;top:316px;letter-spacing:-0.163px">Combat modifiers</div>
<div class="t" style="left:313px;top:330px;letter-spacing:0.195px">Defender: terrain(+), leaders(-), preparation(-), fatigue(-)</div>
<div class="t" style="left:316px;top:344px;letter-spacing:0.072px">morale(-), experience(-)</div>
<div class="t" style="left:313px;top:358px;letter-spacing:0.219px">Attacker: fatigue(-)</div>
<div class="t" style="left:313px;top:386px;letter-spacing:-0.135px">Japanese ground losses:</div>
<div class="t" style="left:331px;top:400px;letter-spacing:-0.014px">21 casualties reported</div>
<div class="t" style="left:340px;top:414px;letter-spacing:-0.036px">Squads: 0 destroyed, 0 disabled</div>
<div class="t" style="left:340px;top:428px;letter-spacing:-0.059px">Non Combat: 0 destroyed, 0 disabled</div>
<div class="t" style="left:340px;top:442px;letter-spacing:-0.058px">Engineers: 0 destroyed, 3 disabled</div>
<div class="t" style="left:313px;top:470px;letter-spacing:-0.13px">Allied ground losses:</div>
<div class="t" style="left:331px;top:484px;letter-spacing:-0.014px">57 casualties reported</div>
<div class="t" style="left:340px;top:498px;letter-spacing:-0.041px">Squads: 0 destroyed, 14 disabled</div>
<div class="t" style="left:340px;top:512px;letter-spacing:-0.059px">Non Combat: 0 destroyed, 2 disabled</div>
<div class="t" style="left:340px;top:526px;letter-spacing:-0.058px">Engineers: 0 destroyed, 0 disabled</div>
<div class="t" style="left:313px;top:554px;letter-spacing:0.157px">Assaulting units:</div>
<div class="t" style="left:325px;top:568px;letter-spacing:-0.135px">2nd Draft Engineer Regiment</div>
<div class="t" style="left:325px;top:582px;letter-spacing:-0.271px">2nd Division Recon Regiment</div>
<div class="t" style="left:313px;top:610px;letter-spacing:0.037px">Defending units:</div>
<div class="t" style="left:325px;top:624px;letter-spacing:-0.269px">RN 106th Base Force</div>
<div class="t" style="left:325px;top:638px;letter-spacing:-0.26px">CW Sarawak Force</div>
<div class="sb" style="left:785px;top:47px;width:16px;height:604px"></div>
<div class="btn" style="left:785px;top:47px;width:16px;height:16px"><svg class="a" style="left:3px;top:5px" width="7" height="4"><path d="M0 4 L3.5 0 L7 4Z" fill="#2A2A2A"/></svg></div>
<div class="btn" style="left:785px;top:63px;width:16px;height:360px"></div>
<div class="btn" style="left:785px;top:635px;width:16px;height:16px"><svg class="a" style="left:3px;top:5px" width="7" height="4"><path d="M0 0 L3.5 4 L7 0Z" fill="#2A2A2A"/></svg></div>
<div class="a" style="left:390px;top:54px;width:55px;height:32px;border:1px solid #B83434"></div>
<div class="a" style="left:289px;top:168px;width:257px;height:28px;border:1px solid #B83434"></div>
<div class="a" style="left:3px;top:658px;width:801px;height:1px;background:#404040;"></div>
<div class="a" style="left:3px;top:659px;width:801px;height:1px;background:#808080;"></div>
<div class="a" style="left:3px;top:658px;width:1px;height:188px;background:#404040;"></div>
<div class="a" style="left:4px;top:659px;width:1px;height:187px;background:#808080;"></div>
<div class="a" style="left:5px;top:660px;width:781px;height:186px;background:#4C84A8;overflow:hidden"><svg width="804" height="846" viewBox="0 0 804 846" style="position:absolute;left:-5px;top:-660px">
<defs>
<filter id="tex" x="0" y="0" width="100%" height="100%">
 <feTurbulence type="fractalNoise" baseFrequency="0.45" numOctaves="2" seed="3" result="n"/>
 <feColorMatrix in="n" type="matrix" values="0 0 0 0 0  0 0 0 0 0  0 0 0 0 0  0 0 0 -4 2.15" result="a"/>
 <feComposite in="SourceGraphic" in2="a" operator="in"/>
</filter>
<filter id="texdark" x="0" y="0" width="100%" height="100%">
 <feTurbulence type="fractalNoise" baseFrequency="0.09" numOctaves="2" seed="7" result="n"/>
 <feColorMatrix in="n" type="matrix" values="0 0 0 0 0  0 0 0 0 0  0 0 0 0 0  0 0 0 -5 2.6" result="a"/>
 <feComposite in="SourceGraphic" in2="a" operator="in"/>
</filter>
<filter id="tex2" x="-50%" y="-50%" width="200%" height="200%">
 <feTurbulence type="fractalNoise" baseFrequency="0.5" numOctaves="1" seed="11" result="n"/>
 <feColorMatrix in="n" type="matrix" values="0 0 0 0 0  0 0 0 0 0  0 0 0 0 0  0 0 0 -2 1.3" result="a"/>
 <feComposite in="SourceGraphic" in2="a" operator="in" result="c"/>
 <feGaussianBlur in="c" stdDeviation="0.5"/>
</filter>
<filter id="texgray" x="0" y="0" width="100%" height="100%">
 <feTurbulence type="fractalNoise" baseFrequency="0.6" numOctaves="2" seed="21" result="n"/>
 <feColorMatrix in="n" type="matrix" values="0 0 0 0 0  0 0 0 0 0  0 0 0 0 0  0 0 0 -6 3.4" result="a"/>
 <feTurbulence type="fractalNoise" baseFrequency="0.04" numOctaves="2" seed="5" result="n2"/>
 <feColorMatrix in="n2" type="matrix" values="0 0 0 0 0  0 0 0 0 0  0 0 0 0 0  0 0 0 -5 2.7" result="a2"/>
 <feComposite in="a" in2="a2" operator="in" result="a3"/>
 <feComposite in="SourceGraphic" in2="a3" operator="in"/>
</filter>
<filter id="blur6"><feGaussianBlur stdDeviation="2.5"/></filter>
<filter id="sh" x="-20%" y="-40%" width="140%" height="180%"><feDropShadow dx="1" dy="1" stdDeviation="0.8" flood-color="#000" flood-opacity="0.9"/></filter>
<clipPath id="landclip"><path d="M0,660 L27,660 L34,682 L35,693 L29,702 L16,703.5 L0,703.5 Z M0,706 L18,713 L20,720 L13.5,724 L0,721 Z M0,769 L13.5,770 L25,779 L34,786 L29,799 L25,817 L22.5,833 L21,850 L0,850 Z M68,660 L76.7,660 L76,672 L75,684 L72,688 L69,684 L68,672 Z M80,660 L101.5,660 L101,672 L98,684 L90,687 L84,684 L81,672 Z M38,735 L44,734 L46,740 L53,741 L56,738 L58.6,743 L58,752 L52,760 L44,761 L38,756 L39,745 Z M71,727 L73,733 L77,740 L78,746 L82,752 L87,758 L86,762 L80,763 L76,756 L72,750 L66,747 L60,742 L62,736 L68,734 Z M374,665 L377,667 L376,673 L372,678 L366,679 L365,674 L369,670 Z M357,702 L362,702 L366,707 L364,712 L357,713 L354,708 Z M484,760 L486,763 L483,770 L479,778 L475,784 L472.6,782 L474,774 L478,765 Z M291,850 L290.6,832.7 L293.8,825 L300,815 L303.8,797.6 L310,792.6 L311.3,783.9 L315,780.7 L322.6,783.2 L328.9,785 L340,783.2 L326.4,776.3 L332.6,773.8 L338.9,767 L350,765.7 L356.4,757.5 L360.2,750 L365.2,749.4 L372.7,752.5 L379,752 L378.4,765 L375,770 L376,790 L386,803 L402,806 L417,812 L424,815 L432,822 L435,832 L441,841 L442,850 Z M440,850 L437,832 L433.8,820 L440,818 L445,820 L446.3,811 L452.6,799 L456,792.6 L457.6,787.6 L463,781 L467.6,777.6 L471,781 L474,786.4 L480,790 L485,792.6 L492.7,786.4 L487.7,782.6 L482.7,776.3 L486.4,769.4 L497.7,767 L516.5,766.3 L522,773 L544,779 L569,784 L589,779 L609,764 L625,761 L651,749 L661,741 L663.5,727 L667,728.6 L671,736 L684,740 L701.5,736 L722,735 L734.5,739 L740,749 L750,751 L757,741 L752,731 L762,723.5 L775,721 L790,728 L790,850 Z"/></clipPath>
</defs>
<rect x="0" y="655" width="804" height="191" fill="#4C84A8"/>
<path d="M612,655 L790,655 L790,680 L778,682 L765,688 L750,693 L735,690 L720,686 L701,686 L685,690 L665,695 L650,694 L635,690 L622,687 L615,677 Z" fill="#2F4B72" filter="url(#blur6)"/>
<path d="M0,660 L27,660 L34,682 L35,693 L29,702 L16,703.5 L0,703.5 Z M0,706 L18,713 L20,720 L13.5,724 L0,721 Z M0,769 L13.5,770 L25,779 L34,786 L29,799 L25,817 L22.5,833 L21,850 L0,850 Z M68,660 L76.7,660 L76,672 L75,684 L72,688 L69,684 L68,672 Z M80,660 L101.5,660 L101,672 L98,684 L90,687 L84,684 L81,672 Z M38,735 L44,734 L46,740 L53,741 L56,738 L58.6,743 L58,752 L52,760 L44,761 L38,756 L39,745 Z M71,727 L73,733 L77,740 L78,746 L82,752 L87,758 L86,762 L80,763 L76,756 L72,750 L66,747 L60,742 L62,736 L68,734 Z M374,665 L377,667 L376,673 L372,678 L366,679 L365,674 L369,670 Z M357,702 L362,702 L366,707 L364,712 L357,713 L354,708 Z M484,760 L486,763 L483,770 L479,778 L475,784 L472.6,782 L474,774 L478,765 Z M291,850 L290.6,832.7 L293.8,825 L300,815 L303.8,797.6 L310,792.6 L311.3,783.9 L315,780.7 L322.6,783.2 L328.9,785 L340,783.2 L326.4,776.3 L332.6,773.8 L338.9,767 L350,765.7 L356.4,757.5 L360.2,750 L365.2,749.4 L372.7,752.5 L379,752 L378.4,765 L375,770 L376,790 L386,803 L402,806 L417,812 L424,815 L432,822 L435,832 L441,841 L442,850 Z M440,850 L437,832 L433.8,820 L440,818 L445,820 L446.3,811 L452.6,799 L456,792.6 L457.6,787.6 L463,781 L467.6,777.6 L471,781 L474,786.4 L480,790 L485,792.6 L492.7,786.4 L487.7,782.6 L482.7,776.3 L486.4,769.4 L497.7,767 L516.5,766.3 L522,773 L544,779 L569,784 L589,779 L609,764 L625,761 L651,749 L661,741 L663.5,727 L667,728.6 L671,736 L684,740 L701.5,736 L722,735 L734.5,739 L740,749 L750,751 L757,741 L752,731 L762,723.5 L775,721 L790,728 L790,850 Z" fill="#42602A" stroke="#C8D8A0" stroke-width="1.2" stroke-opacity="0.75"/>
<g clip-path="url(#landclip)">
<rect x="0" y="655" width="804" height="191" fill="#1E3014" filter="url(#texdark)" opacity="0.85"/>
<rect x="0" y="655" width="804" height="191" fill="#80AE46" filter="url(#tex)" opacity="0.7"/>
<path d="M0,660 L27,660 L34,682 L35,693 L29,702 L16,703.5 L0,703.5 Z M0,706 L18,713 L20,720 L13.5,724 L0,721 Z M0,769 L13.5,770 L25,779 L34,786 L29,799 L25,817 L22.5,833 L21,850 L0,850 Z" fill="#34524A" opacity="0.45"/>
<path d="M350,748 L385,748 L380,790 L340,790 Z M470,765 L500,762 L495,800 L465,800 Z" fill="#3A5A52" opacity="0.35" filter="url(#blur6)"/>
<path d="M330,760 L790,760 L790,850 L330,850 Z" fill="#9C988A" filter="url(#texgray)" opacity="0.5"/>
<ellipse cx="368" cy="812" rx="12" ry="14" fill="#8A8478" filter="url(#tex2)" opacity="0.55"/>
<ellipse cx="560" cy="810" rx="20" ry="8" fill="#8A8478" filter="url(#tex2)" opacity="0.55"/>
<ellipse cx="720" cy="790" rx="18" ry="12" fill="#8A8478" filter="url(#tex2)" opacity="0.55"/>
<ellipse cx="690" cy="830" rx="22" ry="10" fill="#8A8478" filter="url(#tex2)" opacity="0.55"/>
<ellipse cx="610" cy="835" rx="15" ry="8" fill="#8A8478" filter="url(#tex2)" opacity="0.55"/>
<ellipse cx="770" cy="815" rx="10" ry="14" fill="#8A8478" filter="url(#tex2)" opacity="0.55"/>
<ellipse cx="470" cy="838" rx="10" ry="6" fill="#8A8478" filter="url(#tex2)" opacity="0.55"/>
</g>
<path d="M344,850 L352.7,835 L360,831.5 L375,830 L390,834 L405,840 L412,850 Z" fill="#A2BC6C" opacity="0.8"/>
<path d="M80,693 L83,694 L84,700 L85,708 L84,716 L82,722 L79,721 L80,712 L78,704 Z" fill="#4A64B8"/>
<path d="M81,695 L82,699 L80,705 L82,709 L81,714 L82,719" stroke="#B0C8F0" stroke-width="1" fill="none" stroke-dasharray="2 1.5"/>
<path d="M357.7,782.6 L354,780 L351.4,780 L347.7,783.9 L345,790 L332.6,792.6 L317.6,788.9 L316.3,790 L313.8,800 L308.8,806.4 L307.6,820.2 L302.5,830.2 L303.8,837.7 L306.3,846" stroke="#D8BC58" stroke-width="2.6" fill="none" stroke-linejoin="round"/>
<path d="M317.6,793.9 L327.6,810.2 L332.6,820.2 L338.9,825.2 L362.7,826.5 L367.7,820.2 L376.5,817.7" stroke="#D8BC58" stroke-width="2.6" fill="none" stroke-linejoin="round"/>
<path d="M762,750 L765,760 L778,768 L781,776 L778,787" stroke="#D4B855" stroke-width="2.5" fill="none"/>
<path d="M375,768 L375,800 L396,806 L396,830 L405,837 L414,846" stroke="#D08830" stroke-width="3.5" fill="none"/>
<g stroke="#D4902C" stroke-width="4.5" fill="none" stroke-linejoin="round" opacity="0.95">
<path d="M689,741 L690,758 L712,772.7 L732.7,760 L732,739"/>
<path d="M732.7,760 L752.7,771 L753.6,794.5 L732.7,812.7 L732.7,836.4 L716,850"/>
<path d="M753.6,794.5 L772.7,809 L774.5,832.7 L786,841"/>
</g>
<g stroke="#8A4A1A" stroke-width="3" fill="none" stroke-dasharray="0 5.5" opacity="0.85" stroke-linecap="round">
<path d="M407,808.5 L415,820 L422.5,823 L427.5,824.6 L429.4,829.6 L430.7,835 L434.4,840 L438,844"/>
<path d="M447,843 L453,833 L459.5,823 L465.7,813 L469.5,803 L478,797.6 L490,796 L498,791 L508,785 L518,779.5 L525,777 L540,777 L554,782 L572,787 L589,782 L604,772 L619,764.5 L640,757 L651,749 L666,744 L689,744 L709,742.6 L732,749 L742,752.7 L757,750"/>
</g>
<circle cx="396.2" cy="784.2" r="22" fill="none" stroke="#F2E418" stroke-width="2.4" opacity="0.9"/>
<circle cx="396.2" cy="784.2" r="19.4" fill="none" stroke="#C81010" stroke-width="4"/>
<circle cx="396.2" cy="784.2" r="15.3" fill="none" stroke="#F2E418" stroke-width="3"/>
<circle cx="396.2" cy="784.2" r="11.3" fill="none" stroke="#C81010" stroke-width="3.6"/>
<circle cx="396.2" cy="784.2" r="9.3" fill="#2E56A0" stroke="#8098C8" stroke-width="0.8"/>
<path d="M396.2,776.6 L398.02,781.69 L403.43,781.85 L399.15,785.16 L400.67,790.35 L396.2,787.3 L391.73,790.35 L393.25,785.16 L388.97,781.85 L394.38,781.69 Z" fill="#EEF0FA"/>
<path d="M370.5,784.2 H386.7 M405.7,784.2 H421.59999999999997 M396.2,761.2 V774.7 M396.2,793.7 V807.2" stroke="#C81010" stroke-width="3"/>
<text x="400" y="669.5" letter-spacing="0.6" font-family='"Liberation Serif", serif' font-size="13" font-weight="bold" fill="#E4E4E4" filter="url(#sh)" >Soebi-besar</text>
<text x="399" y="756.8" letter-spacing="0.6" font-family='"Liberation Serif", serif' font-size="13" font-weight="bold" fill="#E4E4E4" filter="url(#sh)" >Kuching</text>
<text x="215" y="782.5" letter-spacing="0.6" font-family='"Liberation Serif", serif' font-size="13" font-weight="bold" fill="#E4E4E4" filter="url(#sh)" >Singkawang</text>
<text x="105" y="744.5" letter-spacing="0.6" font-family='"Liberation Serif", serif' font-size="13" font-weight="bold" fill="#E4E4E4" filter="url(#sh)" >Lingga</text>
<text x="620" y="744.5" letter-spacing="0.6" font-family='"Liberation Serif", serif' font-size="13" font-weight="bold" fill="#E4E4E4" filter="url(#sh)" >Miri</text>
<text x="691" y="718.1" letter-spacing="0.6" font-family='"Liberation Serif", serif' font-size="13" font-weight="bold" fill="#E4E4E4" filter="url(#sh)" >Brunei</text>
<text x="759" y="679.0" letter-spacing="0.6" font-family='"Liberation Serif", serif' font-size="13" font-weight="bold" fill="#E4E4E4" filter="url(#sh)" >Jesse</text>
<text x="6" y="719.5" letter-spacing="0.6" font-family='"Liberation Serif", serif' font-size="13" font-weight="bold" fill="#E4E4E4" filter="url(#sh)" >gkep</text>
<text x="4" y="821.5" letter-spacing="0.6" font-family='"Liberation Serif", serif' font-size="13" font-weight="bold" fill="#E4E4E4" filter="url(#sh)" >nbi</text>
<text x="562" y="831.0" letter-spacing="0.6" font-family='"Liberation Serif", serif' font-size="23" font-weight="bold" fill="#D8A028" filter="url(#sh)" textLength="81" lengthAdjust="spacingAndGlyphs">Sarawak</text>
<text x="105" y="667" font-family='"Liberation Mono", monospace' font-size="13" fill="#D0D4DC">Riouw</text>
<text x="105" y="684.8" font-family='"Liberation Mono", monospace' font-size="13" fill="#D0D4DC">Islands</text>
</svg></div>
<div class="a" style="left:802px;top:660px;width:2px;height:186px;background:#fff;"></div>
<div class="sb" style="left:786px;top:660px;width:16px;height:186px"></div>
<div class="btn" style="left:786px;top:660px;width:16px;height:16px"><svg class="a" style="left:3px;top:5px" width="7" height="4"><path d="M0 4 L3.5 0 L7 4Z" fill="#2A2A2A"/></svg></div>
<div class="btn" style="left:786px;top:742px;width:16px;height:9px"></div>
<div class="btn" style="left:786px;top:842px;width:16px;height:16px"></div>
</body></html>
